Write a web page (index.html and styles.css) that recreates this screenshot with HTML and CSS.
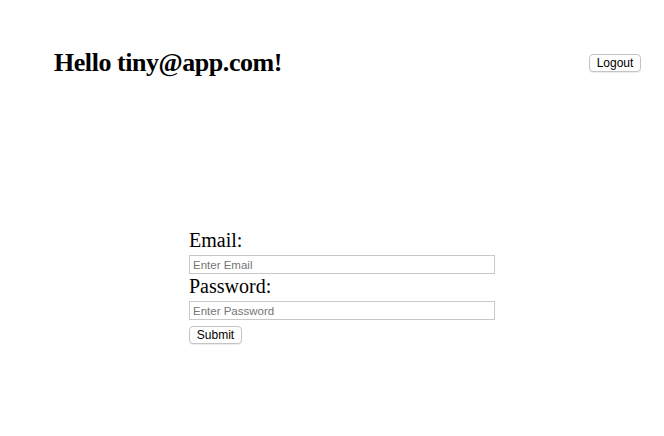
FILE: index.html
```html
<!DOCTYPE html>
<html>
<head>
<meta charset="utf-8">
<link rel="stylesheet" href="styles.css">
</head>
<body>
<header class="top">
  <h1 class="hello">Hello tiny@app.com!</h1>
  <button class="btn logout">Logout</button>
</header>
<main class="main">
  <form class="login">
    <label class="lbl" for="email">Email:</label>
    <input class="field" id="email" type="text" placeholder="Enter Email">
    <label class="lbl" for="pw">Password:</label>
    <input class="field" id="pw" type="password" placeholder="Enter Password">
    <button class="btn submit" type="button">Submit</button>
  </form>
</main>
</body>
</html>
```

FILE: styles.css
```css
html, body {
  margin: 0;
  padding: 0;
  background: #fff;
}
body {
  font-family: "Liberation Serif", serif;
  color: #000;
  width: 664px;
  height: 436px;
  overflow: hidden;
}
.top {
  display: flex;
  justify-content: space-between;
  align-items: flex-start;
  padding: 47px 23px 0 54px;
}
.hello {
  margin: 0;
  font-size: 26px;
  font-weight: bold;
  line-height: 32px;
  letter-spacing: -0.45px;
}
.btn {
  font-family: "Liberation Sans", Arial, sans-serif;
  font-size: 12px;
  color: #000;
  background: #fff;
  border: 1px solid #c4c4c4;
  border-radius: 4px;
  padding: 0 6px;
  height: 18px;
  line-height: 16px;
  box-shadow: 0 1px 1px rgba(0,0,0,0.08);
}
.logout {
  margin-top: 7px;
  width: 52px;
}
.main {
  padding: 150px 0 0 189px;
}
.login {
  display: flex;
  flex-direction: column;
  align-items: flex-start;
}
.lbl {
  font-size: 20px;
  line-height: 22px;
  margin-bottom: 4px;
}
.field {
  box-sizing: border-box;
  width: 306px;
  height: 19px;
  border: 1px solid #c8c8c8;
  padding: 0 3px;
  margin: 0 0 1px 0;
  font-family: "Liberation Sans", Arial, sans-serif;
  font-size: 11.5px;
  outline: none;
}
.field::placeholder {
  color: #757575;
}
.submit {
  margin-top: 5px;
  width: 53px;
}
```
